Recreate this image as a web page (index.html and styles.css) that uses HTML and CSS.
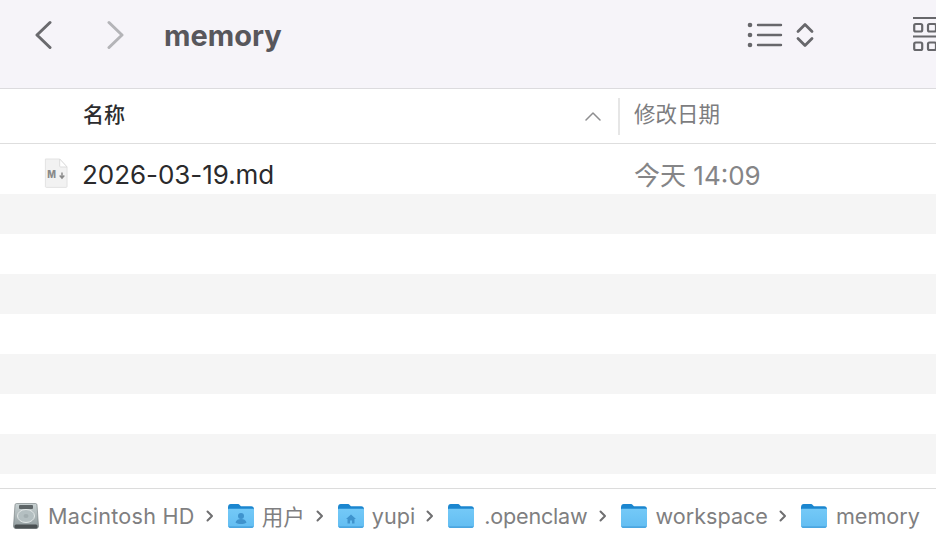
FILE: index.html
```html
<!DOCTYPE html>
<html lang="zh-CN">
<head>
    <meta charset="UTF-8">
    <title>memory</title>
    <link rel="stylesheet" href="styles.css">
</head>
<body>
    <svg class="defs" width="0" height="0">
        <defs>
            <linearGradient id="folder-front" x1="0" y1="0" x2="0" y2="1">
                <stop offset="0" stop-color="#74c9f7"/>
                <stop offset="1" stop-color="#62bdf2"/>
            </linearGradient>
            <linearGradient id="disk-body" x1="0" y1="0" x2="0" y2="1">
                <stop offset="0" stop-color="#c9d2d3"/>
                <stop offset="1" stop-color="#8f9a9c"/>
            </linearGradient>
            <symbol id="folder" viewBox="1 2.500 24 20.700" preserveAspectRatio="none">
                <path d="M1 5.500C1 3.500 2 2.500 3.600 2.500h6c1.200 0 1.800.4 2.600 1.200l.8.8h9.400c1.600 0 2.600 1 2.600 2.600V9H1z" fill="#1b86cf"/>
                <path d="M1 7.600c0-.6.4-1 1-1h22c.6 0 1 .4 1 1v13.200c0 1.500-.9 2.400-2.400 2.400H3.400c-1.500 0-2.400-.9-2.400-2.400z" fill="url(#folder-front)"/>
                <path d="M1.200 21.600c.4 1 1.100 1.600 2.200 1.600h19.200c1.100 0 1.800-.6 2.200-1.600z" fill="#4ba6e0"/>
            </symbol>
        </defs>
    </svg>

    <div class="finder">
        <div class="toolbar">
            <svg class="nav-icon" width="18" height="30" viewBox="0 0 18 30">
                <path d="M16 2.500 3 15l13 12.500" fill="none" stroke="#6a6a6e" stroke-width="3" stroke-linecap="round" stroke-linejoin="round"/>
            </svg>
            <svg class="nav-icon nav-forward" width="18" height="30" viewBox="0 0 18 30">
                <path d="M2 2.500 15 15 2 27.500" fill="none" stroke="#b4b4b8" stroke-width="3" stroke-linecap="round" stroke-linejoin="round"/>
            </svg>
            <div class="folder-title">memory</div>
            <svg class="view-list" width="36" height="26" viewBox="0 0 36 26">
                <g fill="#67676b">
                    <circle cx="3" cy="3" r="2.300"/>
                    <circle cx="3" cy="13" r="2.300"/>
                    <circle cx="3" cy="23" r="2.300"/>
                </g>
                <path d="M11 3h23M11 13h23M11 23h23" fill="none" stroke="#67676b" stroke-width="2.400" stroke-linecap="round"/>
            </svg>
            <svg class="view-sort" width="18" height="28" viewBox="0 0 18 28">
                <path d="M2 10.500 9 3.500l7 7M2 17.500l7 7 7-7" fill="none" stroke="#67676b" stroke-width="2.800" stroke-linecap="round" stroke-linejoin="round"/>
            </svg>
            <svg class="view-grid" width="24" height="36" viewBox="0 0 24 36">
                <g fill="none" stroke="#67676b">
                    <path d="M0 1h24M0 19.500h24" stroke-width="2"/>
                    <rect x="1.200" y="7" width="8" height="7.500" rx="1.500" stroke-width="2.200"/>
                    <rect x="15" y="7" width="8" height="7.500" rx="1.500" stroke-width="2.200"/>
                    <rect x="1.200" y="25.500" width="8" height="7.500" rx="1.500" stroke-width="2.200"/>
                    <rect x="15" y="25.500" width="8" height="7.500" rx="1.500" stroke-width="2.200"/>
                </g>
            </svg>
        </div>

        <div class="list-header">
            <div class="col-name">
                <span class="col-name-label">名称</span>
                <svg width="16" height="10" viewBox="0 0 16 10">
                    <path d="M1 9l7-7 7 7" fill="none" stroke="#8e8e90" stroke-width="1.500" stroke-linecap="round" stroke-linejoin="round"/>
                </svg>
            </div>
            <div class="col-date">修改日期</div>
        </div>

        <div class="file-list">
            <div class="file-row">
                <div class="file-name">
                    <svg class="file-icon" width="24" height="30" viewBox="0 0 26 30" preserveAspectRatio="none">
                        <path d="M1.500 1h15.500l8 8v19.500c0 .5-.4.900-.9.900H2.400c-.5 0-.9-.4-.9-.9z" fill="#f2f2f2" stroke="#e2e2e2"/>
                        <path d="M17 1v7c0 .6.400 1 1 1h7z" fill="#fff" stroke="#dcdcdc"/>
                        <text x="3.500" y="20.500" class="md-mark">M</text>
                        <path d="M19.500 14.500v5M17 17.500l2.500 2.500 2.500-2.500" fill="none" stroke="#8a8a8a" stroke-width="1.600"/>
                    </svg>
                    <span>2026-03-19.md</span>
                </div>
                <div class="file-date">今天 14:09</div>
            </div>
            <div class="stripe"></div>
            <div class="blank"></div>
            <div class="stripe"></div>
            <div class="blank"></div>
            <div class="stripe"></div>
            <div class="blank"></div>
            <div class="stripe"></div>
        </div>

        <div class="path-bar">
            <div class="crumb">
                <svg class="disk-icon" width="26" height="28" viewBox="0 0 26 28">
                    <path d="M3.500 1.500h19c.8 0 1.300.5 1.500 1.300L25.500 24c0 1.500-.8 2.500-2.300 2.500H2.800C1.300 26.500.5 25.500.5 24L2 2.800c.2-.8.700-1.300 1.500-1.300z" fill="url(#disk-body)" stroke="#6f7779" stroke-width=".6"/>
                    <rect x="6" y="3" width="14" height="4" rx="1" fill="#5e6567"/>
                    <ellipse cx="13" cy="14" rx="8.500" ry="6.500" fill="#b4bfc1" stroke="#e3e8e8"/>
                    <ellipse cx="13" cy="14" rx="2.500" ry="2" fill="#a3aeb0"/>
                    <rect x="1.500" y="22.500" width="23" height="4" rx="1.500" fill="#4b5153"/>
                </svg>
                <span class="crumb-wide">Macintosh HD</span>
            </div>
            <svg class="crumb-sep" width="8" height="12" viewBox="0 0 8 12"><path d="M1.500 1.500 6 6l-4.500 4.500" /></svg>
            <div class="crumb">
                <svg class="folder-icon" width="26" height="24" viewBox="0 0 26 24">
                    <use href="#folder"/>
                    <circle cx="13" cy="12" r="3" fill="#3f93cd"/>
                    <path d="M7.500 18.500c.6-2.500 2.800-3.500 5.500-3.500s4.900 1 5.500 3.500c-1.500 1-3.500 1.500-5.500 1.500s-4-.5-5.500-1.500z" fill="#3f93cd"/>
                </svg>
                <span>用户</span>
            </div>
            <svg class="crumb-sep" width="8" height="12" viewBox="0 0 8 12"><path d="M1.500 1.500 6 6l-4.500 4.500" /></svg>
            <div class="crumb">
                <svg class="folder-icon" width="26" height="24" viewBox="0 0 26 24">
                    <use href="#folder"/>
                    <path d="M8 15 13 10.500l5 4.500h-1.500v4.500h-2.500v-3h-2v3H9.500V15z" fill="#3f93cd"/>
                </svg>
                <span>yupi</span>
            </div>
            <svg class="crumb-sep" width="8" height="12" viewBox="0 0 8 12"><path d="M1.500 1.500 6 6l-4.500 4.500" /></svg>
            <div class="crumb">
                <svg class="folder-icon" width="26" height="24" viewBox="0 0 26 24"><use href="#folder"/></svg>
                <span class="crumb-tight">.openclaw</span>
            </div>
            <svg class="crumb-sep" width="8" height="12" viewBox="0 0 8 12"><path d="M1.500 1.500 6 6l-4.500 4.500" /></svg>
            <div class="crumb crumb-loose">
                <svg class="folder-icon" width="26" height="24" viewBox="0 0 26 24"><use href="#folder"/></svg>
                <span>workspace</span>
            </div>
            <svg class="crumb-sep" width="8" height="12" viewBox="0 0 8 12"><path d="M1.500 1.500 6 6l-4.500 4.500" /></svg>
            <div class="crumb crumb-loose">
                <svg class="folder-icon" width="26" height="24" viewBox="0 0 26 24"><use href="#folder"/></svg>
                <span>memory</span>
            </div>
        </div>
    </div>
</body>
</html>
```

FILE: styles.css
```css
body {
    margin: 0;
    padding: 0;
    overflow: hidden;
    background-color: #fff;
    font-family: Inter, "Noto Sans CJK SC", sans-serif;
}

.defs {
    display: block;
    height: 0;
}

.finder {
    display: flex;
    flex-direction: column;
    width: 936px;
    height: 544px;
    overflow: hidden;
}

.toolbar {
    display: flex;
    align-items: center;
    flex: none;
    height: 70px;
    padding-bottom: 18px;
    padding-left: 34px;
    background-color: #f6f4f9;
    border-bottom: 1px solid #dcdbde;
}

.toolbar svg {
    flex: none;
}

.nav-forward {
    margin-left: 55px;
}

.folder-title {
    flex: none;
    margin-left: 39px;
    font-size: 29px;
    font-weight: 700;
    color: #58575c;
}

.view-list {
    margin-left: 465px;
}

.view-sort {
    margin-left: 13px;
}

.view-grid {
    margin-left: 99px;
}

.list-header {
    display: flex;
    align-items: center;
    flex: none;
    height: 54px;
    border-bottom: 1px solid #dedede;
}

.col-name {
    display: flex;
    align-items: center;
    justify-content: space-between;
    box-sizing: border-box;
    width: 620px;
    height: 37px;
    padding-left: 83px;
    padding-right: 17px;
    border-right: 2px solid #e6e6e6;
}

.col-name-label {
    margin-bottom: 6px;
    font-size: 21px;
    font-weight: 500;
    color: #2c2c2e;
}

.col-date {
    margin-left: 14px;
    margin-bottom: 7px;
    font-size: 21.500px;
    color: #7d7d7f;
}

.file-list {
    flex: 1;
}

.file-row {
    display: flex;
    align-items: center;
    justify-content: space-between;
    box-sizing: border-box;
    height: 50px;
    padding-top: 8px;
}

.file-name {
    display: flex;
    align-items: center;
    width: 634px;
    padding-left: 44px;
    box-sizing: border-box;
    font-size: 26px;
    color: #2a2a2c;
}

.file-name span {
    margin-left: 14px;
    margin-top: 3px;
    letter-spacing: -0.050px;
}

.file-icon {
    flex: none;
}

.md-mark {
    font-size: 10px;
    font-weight: 800;
    fill: #8a8a8a;
}

.file-date {
    flex: 1;
    font-size: 26px;
    color: #858587;
}

.stripe,
.blank {
    height: 40px;
}

.stripe {
    background-color: #f5f5f5;
}

.path-bar {
    display: flex;
    align-items: center;
    flex: none;
    box-sizing: border-box;
    height: 56px;
    padding-left: 13px;
    padding-bottom: 2px;
    border-top: 1px solid #dcdcdc;
    background-color: #fff;
    font-size: 21.600px;
    color: #7f7f81;
}

.crumb {
    display: flex;
    align-items: center;
    gap: 8px;
    white-space: nowrap;
}

.crumb-loose {
    gap: 9px;
}

.crumb .crumb-wide {
    margin-left: 1px;
    letter-spacing: 0.250px;
}

.crumb .crumb-tight {
    margin-left: 2px;
    letter-spacing: -0.200px;
}

.crumb-sep {
    flex: none;
    margin: 0 14px 0 11px;
}

.crumb-sep path {
    fill: none;
    stroke: #6f6f71;
    stroke-width: 2;
    stroke-linecap: round;
    stroke-linejoin: round;
}
```
